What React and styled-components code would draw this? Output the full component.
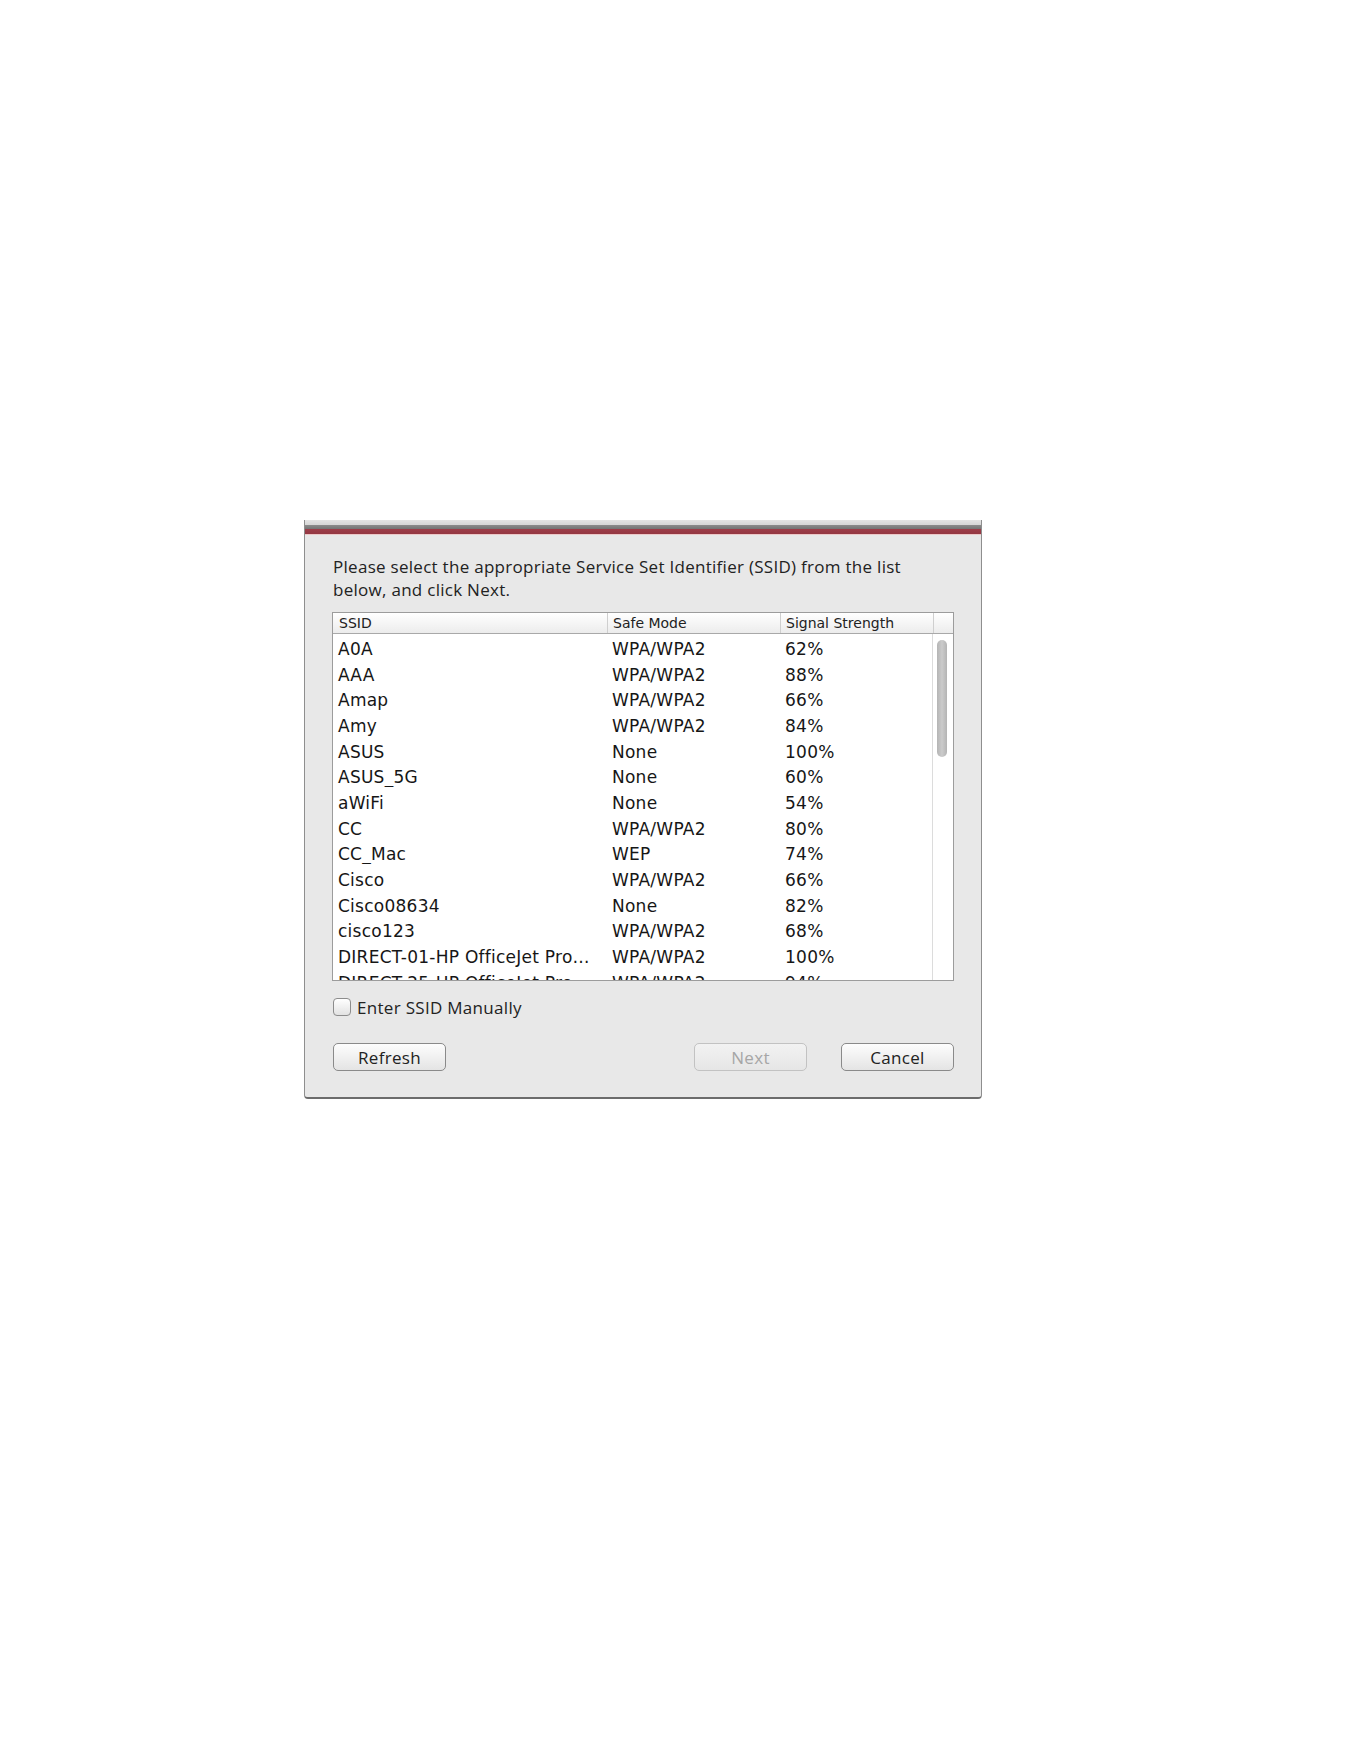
import React from 'react';
import styled, { createGlobalStyle } from 'styled-components';

const GlobalStyle = createGlobalStyle`
  html, body { margin: 0; padding: 0; background: #ffffff; }
  body { font-family: "DejaVu Sans", "Liberation Sans", sans-serif; }
`;

const uiFont = `"Open Sans", Lato, sans-serif`;

const Page = styled.div`
  min-height: 1761px;
  box-sizing: border-box;
  padding: 520px 0 0 304px;
`;

const Dialog = styled.div`
  width: 678px;
  box-sizing: border-box;
  background: #e8e8e8;
  border-left: 1px solid #8e8e8e;
  border-right: 1px solid #8e8e8e;
  border-bottom: 2px solid #6c6c6c;
  border-radius: 0 0 4px 4px;
  display: flex;
  flex-direction: column;
`;

const TitleStrip = styled.div`
  height: 15px;
  background: linear-gradient(
    to bottom,
    #e4e4e4 0,
    #d6d6d6 5px,
    #8c8c8c 5px,
    #747474 9px,
    #9d3d49 9px,
    #943742 14px,
    #ecc8c8 14px,
    #ecc8c8 15px
  );
`;

const Content = styled.div`
  padding: 21px 27px 26px 27px;
  display: flex;
  flex-direction: column;
`;

const Intro = styled.p`
  margin: 0 0 11px 1px;
  font-family: ${uiFont};
  font-size: 17px;
  letter-spacing: 0.28px;
  line-height: 22.5px;
  color: #222;
`;

const Table = styled.div`
  width: 622px;
  height: 369px;
  box-sizing: border-box;
  border: 1px solid #9c9c9c;
  background: #ffffff;
  display: flex;
  flex-direction: column;
  overflow: hidden;
`;

const HeaderRow = styled.div`
  display: grid;
  grid-template-columns: 274px 173px 153px 1fr;
  height: 20px;
  flex: none;
  border-bottom: 1px solid #a9a9a9;
  background: linear-gradient(to bottom, #ffffff, #ececec);
`;

const HeaderCell = styled.div`
  padding-left: ${p => (p.$first ? 6 : 5)}px;
  border-left: ${p => (p.$first ? 'none' : '1px solid #cfcfcf')};
  font-size: 14px;
  line-height: 20px;
  color: #222;
  white-space: nowrap;
  overflow: hidden;
`;

const ListArea = styled.div`
  flex: 1;
  display: flex;
  min-height: 0;
`;

const Rows = styled.div`
  flex: 1;
  padding-top: 2px;
  overflow: hidden;
`;

const Row = styled.div`
  display: grid;
  grid-template-columns: 274px 173px 153px;
  height: 25.7px;
  align-items: center;
`;

const Cell = styled.div`
  padding-left: 5px;
  font-size: 17px;
  letter-spacing: 0.25px;
  color: #161616;
  white-space: nowrap;
  overflow: hidden;
`;

const ScrollTrack = styled.div`
  width: 20px;
  flex: none;
  border-left: 1px solid #dcdcdc;
  position: relative;
`;

const Thumb = styled.div`
  position: absolute;
  top: 6px;
  left: 4px;
  width: 10px;
  height: 117px;
  border-radius: 5px;
  background: linear-gradient(to right, #b4b4b4, #cbcbcb 50%, #b4b4b4);
`;

const CheckRow = styled.label`
  margin-top: 17px;
  display: flex;
  align-items: center;
  gap: 6px;
  height: 18px;
  margin-left: 1px;
`;

const CheckBox = styled.span`
  width: 18px;
  height: 18px;
  box-sizing: border-box;
  border: 1px solid #8c8c8c;
  border-radius: 4px;
  background: linear-gradient(to bottom, #ffffff, #e2e2e2);
`;

const CheckLabel = styled.span`
  font-family: ${uiFont};
  font-size: 17px;
  letter-spacing: 0.3px;
  color: #222;
`;

const ButtonRow = styled.div`
  margin-top: 27px;
  margin-left: 1px;
  display: flex;
  align-items: center;
  gap: 34px;
`;

const Spacer = styled.div`
  flex: 1;
`;

const Button = styled.button`
  width: 113px;
  height: 28px;
  box-sizing: border-box;
  border: 1px solid ${p => (p.disabled ? '#c2c2c2' : '#8a8a8a')};
  border-radius: 5px;
  background: ${p =>
    p.disabled
      ? 'linear-gradient(to bottom, #f2f2f2, #e6e6e6)'
      : 'linear-gradient(to bottom, #fdfdfd, #e4e4e4)'};
  font-family: ${uiFont};
  font-size: 17px;
  letter-spacing: 0.3px;
  color: ${p => (p.disabled ? '#a6a6a6' : '#222')};
  padding: 0;
`;

const networks = [
  ['A0A', 'WPA/WPA2', '62%'],
  ['AAA', 'WPA/WPA2', '88%'],
  ['Amap', 'WPA/WPA2', '66%'],
  ['Amy', 'WPA/WPA2', '84%'],
  ['ASUS', 'None', '100%'],
  ['ASUS_5G', 'None', '60%'],
  ['aWiFi', 'None', '54%'],
  ['CC', 'WPA/WPA2', '80%'],
  ['CC_Mac', 'WEP', '74%'],
  ['Cisco', 'WPA/WPA2', '66%'],
  ['Cisco08634', 'None', '82%'],
  ['cisco123', 'WPA/WPA2', '68%'],
  ['DIRECT-01-HP OfficeJet Pro…', 'WPA/WPA2', '100%'],
  ['DIRECT-25-HP OfficeJet Pro…', 'WPA/WPA2', '94%'],
];

export default function App() {
  return (
    <Page>
      <GlobalStyle />
      <Dialog>
        <TitleStrip />
        <Content>
          <Intro>
            Please select the appropriate Service Set Identifier (SSID) from the list
            <br />
            below, and click Next.
          </Intro>
          <Table>
            <HeaderRow>
              <HeaderCell $first>SSID</HeaderCell>
              <HeaderCell>Safe Mode</HeaderCell>
              <HeaderCell>Signal Strength</HeaderCell>
              <HeaderCell />
            </HeaderRow>
            <ListArea>
              <Rows>
                {networks.map(([ssid, mode, signal]) => (
                  <Row key={ssid}>
                    <Cell>{ssid}</Cell>
                    <Cell>{mode}</Cell>
                    <Cell>{signal}</Cell>
                  </Row>
                ))}
              </Rows>
              <ScrollTrack>
                <Thumb />
              </ScrollTrack>
            </ListArea>
          </Table>
          <CheckRow>
            <CheckBox />
            <CheckLabel>Enter SSID Manually</CheckLabel>
          </CheckRow>
          <ButtonRow>
            <Button>Refresh</Button>
            <Spacer />
            <Button disabled>Next</Button>
            <Button>Cancel</Button>
          </ButtonRow>
        </Content>
      </Dialog>
    </Page>
  );
}
